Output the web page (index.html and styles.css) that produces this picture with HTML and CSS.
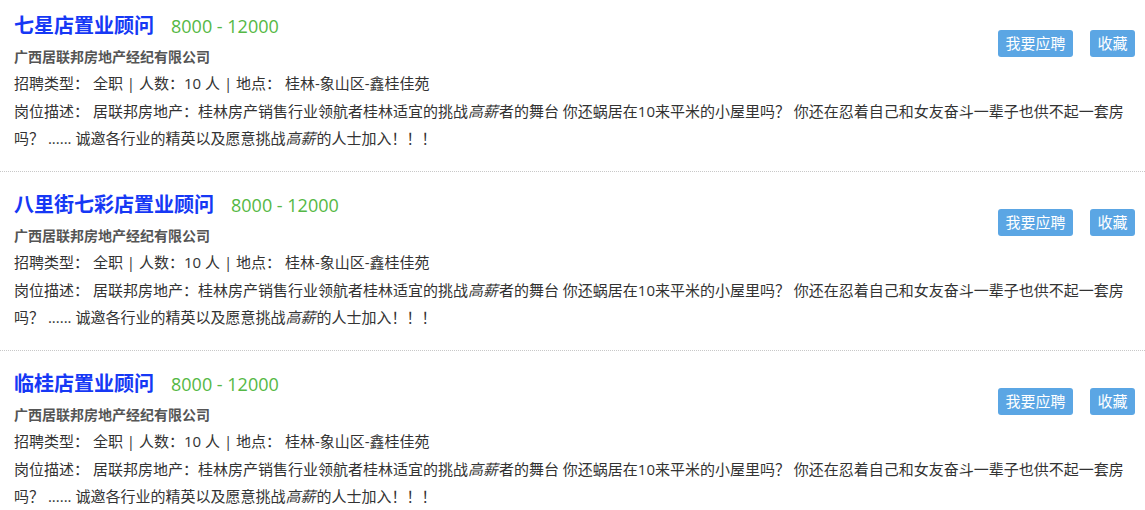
FILE: index.html
```html
<!DOCTYPE html>
<html lang="zh-CN">
<head>
<meta charset="utf-8">
<link rel="stylesheet" href="styles.css">
</head>
<body>
<div class="job-list">
  <div class="job">
    <div class="job-head">
      <a class="job-title">七星店置业顾问</a>
      <span class="job-salary">8000 - 12000</span>
    </div>
    <div class="job-company">广西居联邦房地产经纪有限公司</div>
    <div class="job-actions">
      <button class="btn">我要应聘</button>
      <button class="btn">收藏</button>
    </div>
    <div class="job-info">招聘类型： 全职 | 人数：10 人 | 地点： 桂林-象山区-鑫桂佳苑</div>
    <div class="job-desc">岗位描述： 居联邦房地产：桂林房产销售行业领航者桂林适宜的挑战<em>高薪</em>者的舞台 你还蜗居在10来平米的小屋里吗？ 你还在忍着自己和女友奋斗一辈子也供不起一套房吗？ ...... 诚邀各行业的精英以及愿意挑战<em>高薪</em>的人士加入！！！</div>
  </div>
  <div class="job">
    <div class="job-head">
      <a class="job-title">八里街七彩店置业顾问</a>
      <span class="job-salary">8000 - 12000</span>
    </div>
    <div class="job-company">广西居联邦房地产经纪有限公司</div>
    <div class="job-actions">
      <button class="btn">我要应聘</button>
      <button class="btn">收藏</button>
    </div>
    <div class="job-info">招聘类型： 全职 | 人数：10 人 | 地点： 桂林-象山区-鑫桂佳苑</div>
    <div class="job-desc">岗位描述： 居联邦房地产：桂林房产销售行业领航者桂林适宜的挑战<em>高薪</em>者的舞台 你还蜗居在10来平米的小屋里吗？ 你还在忍着自己和女友奋斗一辈子也供不起一套房吗？ ...... 诚邀各行业的精英以及愿意挑战<em>高薪</em>的人士加入！！！</div>
  </div>
  <div class="job">
    <div class="job-head">
      <a class="job-title">临桂店置业顾问</a>
      <span class="job-salary">8000 - 12000</span>
    </div>
    <div class="job-company">广西居联邦房地产经纪有限公司</div>
    <div class="job-actions">
      <button class="btn">我要应聘</button>
      <button class="btn">收藏</button>
    </div>
    <div class="job-info">招聘类型： 全职 | 人数：10 人 | 地点： 桂林-象山区-鑫桂佳苑</div>
    <div class="job-desc">岗位描述： 居联邦房地产：桂林房产销售行业领航者桂林适宜的挑战<em>高薪</em>者的舞台 你还蜗居在10来平米的小屋里吗？ 你还在忍着自己和女友奋斗一辈子也供不起一套房吗？ ...... 诚邀各行业的精英以及愿意挑战<em>高薪</em>的人士加入！！！</div>
  </div>
</div>
</body>
</html>
```

FILE: styles.css
```css
* { box-sizing: border-box; }
html, body {
  margin: 0;
  padding: 0;
  background: #fff;
}
body {
  font-family: "Open Sans", "Noto Sans CJK SC", sans-serif;
  font-size: 15px;
  color: #333;
  overflow: hidden;
}
.job-list {
  display: flex;
  flex-direction: column;
}
.job {
  display: grid;
  grid-template-columns: 1fr auto;
  padding: 18px 10px 19px 14px;
  border-bottom: 1px dotted #c8c8c8;
}
.job:first-child {
  padding-top: 11px;
}
.job-head {
  grid-column: 1;
  grid-row: 1;
  display: flex;
  align-items: baseline;
  gap: 17px;
  line-height: 30px;
}
.job-title {
  font-size: 20px;
  font-weight: bold;
  color: #1638f5;
}
.job-salary {
  font-size: 18px;
  color: #55b845;
}
.job-company {
  grid-column: 1;
  grid-row: 2;
  font-size: 14px;
  font-weight: bold;
  color: #555;
  line-height: 26px;
  margin-top: 3px;
}
.job-actions {
  grid-column: 2;
  grid-row: 1 / span 2;
  align-self: start;
  margin-top: 19px;
  display: flex;
  gap: 17px;
}
.btn {
  font-family: inherit;
  font-size: 15px;
  color: #fff;
  background: #5ba6e4;
  border: none;
  border-radius: 3px;
  height: 27px;
  padding: 0 7.5px;
  line-height: 27px;
}
.job-info {
  grid-column: 1 / span 2;
  grid-row: 3;
  line-height: 26px;
}
.job-desc {
  grid-column: 1 / span 2;
  grid-row: 4;
  line-height: 27px;
  margin-top: 2px;
}
.job-desc em {
  font-style: italic;
  padding-right: 1px;
}
```
